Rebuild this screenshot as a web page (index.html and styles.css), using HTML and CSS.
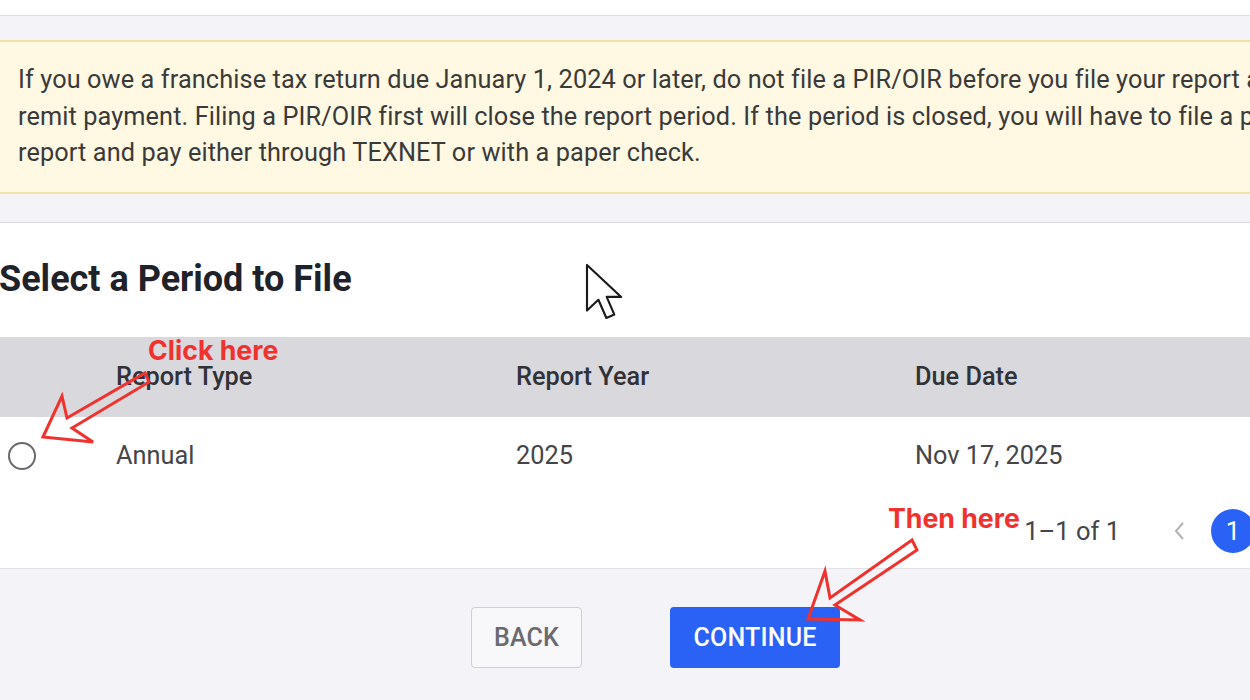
FILE: index.html
```html
<!DOCTYPE html>
<html lang="en">
<head>
<meta charset="utf-8">
<title>Select a Period to File</title>
<link rel="stylesheet" href="styles.css">
</head>
<body>
<div class="page">
  <div class="topbar"></div>
  <div class="band">
    <div class="notice">
      <span class="line">If you owe a franchise tax return due January 1, 2024 or later, do not file a PIR/OIR before you file your report and</span>
      <span class="line">remit payment. Filing a PIR/OIR first will close the report period. If the period is closed, you will have to file a paper</span>
      <span class="line">report and pay either through TEXNET or with a paper check.</span>
    </div>
  </div>
  <div class="panel">
    <h2 class="title">Select a Period to File</h2>
    <div class="grid head">
      <div></div>
      <div>Report Type</div>
      <div>Report Year</div>
      <div>Due Date</div>
    </div>
    <div class="grid row">
      <div class="radio-cell"><span class="radio"></span></div>
      <div>Annual</div>
      <div>2025</div>
      <div>Nov 17, 2025</div>
    </div>
    <div class="pager">
      <span class="count">1–1 of 1</span>
      <svg class="chev" width="14" height="22" viewBox="0 0 14 22"><path d="M11 3 L4 11 L11 19" fill="none" stroke="#b3b3b8" stroke-width="2"/></svg>
      <span class="pagenum">1</span>
    </div>
  </div>
  <div class="actions">
    <button class="btn back">BACK</button>
    <button class="btn cont">CONTINUE</button>
  </div>

  <svg class="overlay" width="1250" height="700" viewBox="0 0 1250 700">
    <polygon points="43,437 62,396 67,418 145,373 149,382 72,428 93,442" fill="none" stroke="#f0322f" stroke-width="3" stroke-linejoin="miter"/>
    <polygon points="808,619 825,571 830,598 912,540 917,550 835,605 860,620" fill="none" stroke="#f0322f" stroke-width="3" stroke-linejoin="miter"/>
    <g transform="translate(587,265) scale(2.85)">
      <path d="M0,0 L0,16 L4,12.2 L6.8,18.6 L9.6,17.4 L6.9,11.2 L12,11.2 Z" fill="#fff" stroke="#1a1a1a" stroke-width="0.75" stroke-linejoin="round"/>
    </g>
  </svg>
  <div class="note note1">Click here</div>
  <div class="note note2">Then here</div>
</div>
</body>
</html>
```

FILE: styles.css
```css
html, body {
  margin: 0;
  padding: 0;
}
body {
  font-family: Roboto, "Liberation Sans", Arial, sans-serif;
  background: #f4f4f8;
}
.page {
  position: relative;
  width: 1250px;
  height: 700px;
  overflow: hidden;
  background: #f4f4f8;
}
.topbar {
  height: 15px;
  background: #ffffff;
  border-bottom: 1px solid #dedee2;
}
.band {
  padding: 24px 0 28px;
  border-bottom: 1px solid #dddde1;
}
.notice {
  background: #fff8e2;
  border-top: 2px solid #f1e3a8;
  border-bottom: 2px solid #f1e3a8;
  padding: 20px 0 20px 18px;
  white-space: nowrap;
  font-size: 25.3px;
  line-height: 36.5px;
  color: #3a3a3a;
  letter-spacing: 0.1px;
}
.line {
  display: block;
}
.panel {
  background: #ffffff;
  border-bottom: 1px solid #e2e2e6;
}
.title {
  margin: 0;
  padding: 36px 0 37px;
  margin-left: -1px;
  font-size: 36px;
  line-height: 41px;
  font-weight: 700;
  color: #1f2228;
}
.grid {
  display: grid;
  grid-template-columns: 116px 400px 399px 1fr;
  align-items: center;
  font-size: 25.3px;
}
.head {
  height: 80px;
  background: #d9d8dc;
  font-weight: 500;
  color: #303238;
}
.row {
  height: 78px;
  color: #454548;
}
.radio-cell {
  padding-left: 8px;
  display: flex;
  align-items: center;
}
.radio {
  display: block;
  width: 24px;
  height: 24px;
  border: 2.5px solid #6a6a6e;
  border-radius: 50%;
}
.pager {
  height: 73px;
  display: flex;
  align-items: center;
  justify-content: flex-end;
  font-size: 25.5px;
  color: #454548;
}
.count {
  margin-right: 52px;
}
.chev {
  margin-right: 25px;
}
.pagenum {
  width: 44px;
  height: 44px;
  border-radius: 50%;
  background: #2a62f5;
  color: #ffffff;
  display: flex;
  align-items: center;
  justify-content: center;
  margin-right: -5px;
}
.actions {
  display: flex;
  gap: 88px;
  padding: 38px 0 0 471px;
}
.btn {
  height: 61px;
  border-radius: 4px;
  font-family: Roboto, "Liberation Sans", Arial, sans-serif;
  font-size: 25px;
  font-weight: 500;
  letter-spacing: 0.2px;
  cursor: pointer;
}
.back {
  width: 111px;
  background: #f8f8fa;
  border: 1.5px solid #cfcfd3;
  color: #6a6a70;
}
.cont {
  width: 170px;
  background: #2a62f5;
  border: none;
  color: #ffffff;
}
.overlay {
  position: absolute;
  left: 0;
  top: 0;
  pointer-events: none;
}
.note {
  position: absolute;
  font-family: Inter, "Liberation Sans", Arial, sans-serif;
  font-weight: 700;
  font-size: 26.7px;
  line-height: 30px;
  color: #f0322f;
  white-space: nowrap;
}
.note1 {
  left: 148px;
  top: 335px;
}
.note2 {
  left: 888px;
  top: 503px;
}
```
